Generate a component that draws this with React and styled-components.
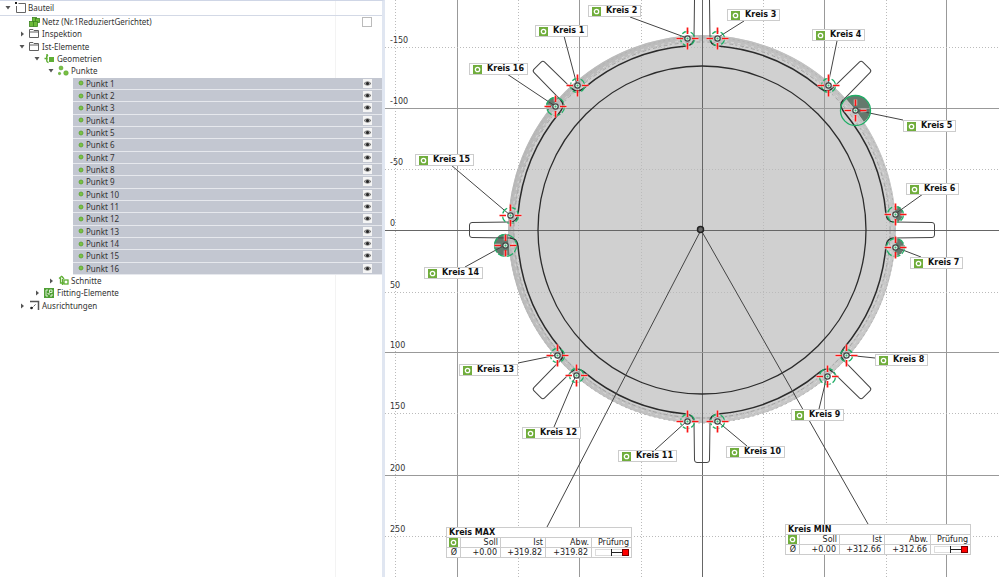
import React from 'react'
import styled, { createGlobalStyle } from 'styled-components'

// everything on the canvas is measured from its top left corner
const CX = 317
const CY = 230

const pins = [
  { id: 1, x: 192, y: 85, r: 7, lx: 150, ly: 25, fx: 179, fy: 36 },
  { id: 2, x: 302, y: 38, r: 7, lx: 203, ly: 5, fx: 245, fy: 17 },
  { id: 3, x: 332, y: 38, r: 7, lx: 342, ly: 9, fx: 359, fy: 21 },
  { id: 4, x: 443, y: 85, r: 7, lx: 427, ly: 29, fx: 452, fy: 41 },
  { id: 5, x: 470, y: 110, r: 15, lx: 518, ly: 120, fx: 518, fy: 120, solid: true },
  { id: 6, x: 510, y: 214, r: 8, lx: 521, ly: 183, fx: 538, fy: 194, solid: true },
  { id: 7, x: 510, y: 247, r: 9, lx: 525, ly: 257, fx: 536, fy: 257, solid: true },
  { id: 8, x: 461, y: 355, r: 6, lx: 490, ly: 354, fx: 490, fy: 358 },
  { id: 9, x: 442, y: 376, r: 8, lx: 406, ly: 409, fx: 434, fy: 409 },
  { id: 10, x: 332, y: 421, r: 7, lx: 341, ly: 446, fx: 362, fy: 446 },
  { id: 11, x: 302, y: 421, r: 7, lx: 233, ly: 450, fx: 270, fy: 450 },
  { id: 12, x: 191, y: 375, r: 7, lx: 137, ly: 427, fx: 169, fy: 427 },
  { id: 13, x: 172, y: 355, r: 7, lx: 74, ly: 364, fx: 133, fy: 363 },
  { id: 14, x: 120, y: 245, r: 11, lx: 39, ly: 267, fx: 80, fy: 267, solid: true },
  { id: 15, x: 125, y: 215, r: 8, lx: 30, ly: 154, fx: 66, fy: 165 },
  { id: 16, x: 170, y: 106, r: 9, lx: 84, ly: 63, fx: 122, fy: 74, solid: true },
]

const columns = [10, 72, 133, 194, 256, 317, 378, 439, 501, 561]
const rows = [
  { y: 47, label: '-150' },
  { y: 108, label: '-100' },
  { y: 169, label: '-50' },
  { y: 230, label: '0' },
  { y: 292, label: '50' },
  { y: 352, label: '100' },
  { y: 413, label: '150' },
  { y: 475, label: '200' },
  { y: 536, label: '250' },
]

const results = [
  { title: 'Kreis MAX', value: '+319.82', x: 61, y: 527 },
  { title: 'Kreis MIN', value: '+312.66', x: 400, y: 524 },
]

const points = Array.from({ length: 16 }, (_, i) => i + 1)
const arms = [0, 45, 90, 135, 180, 225, 270, 315]

const icons = {
  part: (
    <>
      <path d="M3.5 1.5H10.5V10.5H1.5V4" fill="none" stroke="#666" />
      <rect x="0" y="0" width="2" height="2" fill="#222" />
    </>
  ),
  mesh: (
    <g stroke="#3c8420" strokeWidth="0.8" fill="#6dbb3a">
      <rect x="3.5" y="1.5" width="4" height="5" />
      <rect x="6.5" y="2.5" width="4" height="4" />
      <rect x="0.5" y="5.5" width="4" height="5" />
      <rect x="4.5" y="5.5" width="4" height="5" />
    </g>
  ),
  folder: (
    <path d="M0.5 9.5V1.5H4L5 2.5H9.5V9.5ZM0.5 4H9.5" fill="none" stroke="#606060" />
  ),
  geometry: (
    <g fill="#5fae35">
      <rect x="5" y="4" width="5" height="5" />
      <path d="M4 2Q2 3 3 5.500L0.500 5.500M3 5.500Q2 9 4.500 9.500M3 1V4" fill="none" stroke="#5fae35" strokeWidth="1.4" />
    </g>
  ),
  points: (
    <g fill="#79c142" stroke="#4d9628" strokeWidth="0.5">
      <circle cx="3" cy="3" r="2" />
      <circle cx="1.500" cy="8.500" r="1.200" />
      <circle cx="8" cy="8" r="2.300" />
    </g>
  ),
  sections: (
    <g fill="none" stroke="#5fae35" strokeWidth="1.300">
      <rect x="6" y="5" width="4" height="4" />
      <path d="M1 3.500L4 1M2.500 3V8H6M4 1.500L6 4M4.500 4V10" />
    </g>
  ),
  fitting: (
    <>
      <rect x="0" y="1" width="10" height="10" fill="#4f9f35" />
      <path d="M4 3H2V9H4M6 9H8V7M5.500 5.500V3H8V5.500ZM4 6V7H6" fill="none" stroke="#eaf6e2" strokeWidth="0.900" />
    </>
  ),
  alignment: (
    <>
      <path d="M1 1.500H9.500V10" fill="none" stroke="#555" strokeWidth="1.500" />
      <path d="M3 8L7 4" stroke="#555" strokeDasharray="2 1" />
      <circle cx="2.500" cy="8" r="1.300" fill="#222" />
    </>
  ),
}

function TreeItem({ icon, text, indent, open, leaf, children }) {
  return (
    <Row $indent={indent}>
      {leaf ? <span /> : (
        <Toggle type="button" aria-label={text} aria-expanded={!!open}>
          <svg width="6" height="6" viewBox="0 0 6 6">
            <path d={open ? 'M0.500 1H5.500L3 4.500Z' : 'M2 0.500V5.500L5 3Z'} fill="#555" />
          </svg>
        </Toggle>
      )}
      <svg width="12" height="12" viewBox="0 0 12 12">{icons[icon]}</svg>
      <span>{text}</span>
      {children}
    </Row>
  )
}

function CircleIcon() {
  return (
    <svg width="9" height="9" viewBox="0 0 9 9">
      <rect width="9" height="9" fill="#70ad3c" />
      <circle cx="4.5" cy="4.5" r="2.2" fill="none" stroke="#fff" strokeWidth="1.3" />
    </svg>
  )
}

function Drawing() {
  return (
    <Plot aria-hidden="true">
      <defs>
        <linearGradient id="rim" x1="0" y1="0.2" x2="1" y2="0.7">
          <stop offset="0" stopColor="#b6b6b6" />
          <stop offset="0.5" stopColor="#bfbfbf" />
          <stop offset="1" stopColor="#c8c8c8" />
        </linearGradient>
      </defs>

      {pins.filter((p) => p.solid).map((p) => (
        <circle key={p.id} cx={p.x} cy={p.y} r={p.r} fill="#64796d" />
      ))}
      <circle cx={CX} cy={CY - 1} r="194" fill="#d0d0d0" />
      <circle cx={CX} cy={CY - 1} r="191" fill="none" stroke="url(#rim)" strokeWidth="6" strokeOpacity="0.9" />
      <g fill="none">
        <circle cx={CX} cy={CY} r="188" stroke="#999" strokeWidth="0.800" strokeDasharray="4 2 2 3" />
        <circle cx={CX} cy={CY} r="190" stroke="#ddd" strokeWidth="0.800" strokeDasharray="3 4" />
        <circle cx={CX} cy={CY} r="193" stroke="#b2b2b2" strokeDasharray="2 3" />
      </g>

      <g shapeRendering="crispEdges">
        {columns.map((x, i) => (
          <GridLine key={x} x1={x + 0.5} x2={x + 0.5} y1="0" y2="100%" $dotted={i % 2 === 0} $axis={x === CX} />
        ))}
        {rows.map(({ y }, i) => (
          <GridLine key={y} x1="0" x2="100%" y1={y + 0.5} y2={y + 0.5} $dotted={i % 2 === 0} $axis={y === CY} />
        ))}
      </g>

      <g transform={`translate(${CX} ${CY})`} fill="none">
        <circle r="164" stroke="#2b2b2b" strokeWidth="1.300" />
        {arms.map((angle) => (
          <g key={angle} transform={`rotate(${angle})`}>
            <path
              d="M-8 -192L-7.500 -230Q-7.500 -232.500 -5 -232.500H5Q7.500 -232.500 7.500 -230L8 -192"
              stroke="#444"
            />
            <path
              d="M-16 -184Q-8 -185 -8 -192M8 -192Q8 -185 16 -184A184.700 184.700 0 0 1 118.800 -141.400"
              stroke="#2b2b2b"
              strokeWidth="1.500"
            />
          </g>
        ))}
      </g>

      <g stroke="#444">
        {pins.map((p) => <line key={p.id} x1={p.fx} y1={p.fy} x2={p.x} y2={p.y} />)}
        <line x1="316" y1="230" x2="162" y2="527" />
        <line x1="316" y1="230" x2="483" y2="524" />
      </g>
      <circle cx="315.500" cy="229.500" r="3" fill="#666" stroke="#222" strokeWidth="1.500" />

      {pins.map((p) => (
        <g key={p.id} transform={`translate(${p.x + 0.5} ${p.y + 0.5})`} fill="none">
          <circle r={p.r} stroke="#1fae66" strokeWidth="1.300" strokeDasharray={p.r > 12 ? 'none' : '7 2'} />
          <path d="M-11 0H-5M5 0H11M0 -11V-5M0 5V11" stroke="#fff" strokeWidth="3.500" strokeOpacity="0.6" />
          <path d="M-11 0H-4.500M4.500 0H11M0 -11V-4.500M0 4.500V11" stroke="#fb1414" strokeWidth="1.700" />
          <circle r="2.700" fill="#d9eee2" stroke="#444" strokeWidth="1.200" />
          <circle r="1" fill="#35b377" />
        </g>
      ))}

      {rows.map(({ y, label }) => (
        <Tick key={label} x="5" y={y - 4}>{label}</Tick>
      ))}
    </Plot>
  )
}

export default function App() {
  return (
    <Page>
      <GlobalStyle />
      <Sidebar>
        <Header>
          <TreeItem icon="part" text="Bauteil" indent={2} open />
        </Header>
        <Tree>
          <TreeItem icon="mesh" text="Netz (Nr.1ReduziertGerichtet)" indent={16} leaf>
            <Check type="checkbox" aria-label="Netz (Nr.1ReduziertGerichtet)" />
          </TreeItem>
          <TreeItem icon="folder" text="Inspektion" indent={16} />
          <TreeItem icon="folder" text="Ist-Elemente" indent={16} open />
          <TreeItem icon="geometry" text="Geometrien" indent={31} open />
          <TreeItem icon="points" text="Punkte" indent={45} open />
          {points.map((n) => (
            <Point key={n}>
              <svg width="12" height="10" viewBox="0 0 12 10">
                <circle cx="8" cy="5" r="2" fill="#7cc243" stroke="#4f9a2a" strokeWidth="0.7" />
              </svg>
              <span>Punkt {n}</span>
              <Eye type="button" aria-label={`Punkt ${n}`}>
                <svg width="9" height="9" viewBox="0 0 9 9">
                  <path d="M1 4.500Q4.500 1 8 4.500Q4.500 8 1 4.500Z" fill="#aaa" stroke="#666" strokeWidth="0.800" />
                  <circle cx="4.500" cy="4.500" r="1.500" fill="#222" />
                </svg>
              </Eye>
            </Point>
          ))}
          <TreeItem icon="sections" text="Schnitte" indent={45} />
          <TreeItem icon="fitting" text="Fitting-Elemente" indent={31} />
          <TreeItem icon="alignment" text="Ausrichtungen" indent={16} />
        </Tree>
      </Sidebar>

      <Canvas>
        <Drawing />
        {pins.map((p) => (
          <Label key={p.id} $x={p.lx} $y={p.ly}>
            <CircleIcon />
            Kreis {p.id}
          </Label>
        ))}
        {results.map((r) => (
          <Result key={r.title} $x={r.x} $y={r.y}>
            <colgroup>
              <Col $width={14} />
              <Col $width={40} />
              <Col $width={45} />
              <Col $width={46} />
              <Col $width={40} />
            </colgroup>
            <thead>
              <tr><Title colSpan="5">{r.title}</Title></tr>
              <tr>
                <HeadCell><CircleIcon /></HeadCell>
                <HeadCell>Soll</HeadCell>
                <HeadCell>Ist</HeadCell>
                <HeadCell>Abw.</HeadCell>
                <HeadCell>Prüfung</HeadCell>
              </tr>
            </thead>
            <tbody>
              <tr>
                <Cell>Ø</Cell>
                <Cell>+0.00</Cell>
                <Cell>{r.value}</Cell>
                <Cell>{r.value}</Cell>
                <Cell>
                  <svg width="34" height="7" viewBox="0 0 34 7">
                    <rect x="0.5" y="0.5" width="32" height="6" fill="#fff" stroke="#ddd" />
                    <path d="M16.500 0V7M16.500 3.500H28" stroke="#222" />
                    <rect x="27.500" y="0.500" width="6" height="6" fill="#f00" stroke="#700" />
                  </svg>
                </Cell>
              </tr>
            </tbody>
          </Result>
        ))}
      </Canvas>
    </Page>
  )
}

const GlobalStyle = createGlobalStyle`
  * {
    box-sizing: border-box;
  }
  body {
    margin: 0;
    background: #fff;
    font-family: 'Noto Sans', sans-serif;
    font-size: 8px;
    color: #333;
  }
  svg {
    display: block;
    flex: none;
  }
`

const Page = styled.div`
  display: grid;
  grid-template-columns: 385fr 614fr;
  min-height: 100vh;
`

const Sidebar = styled.aside`
  border-top: 1px solid #cfd6e6;
  border-right: 3px solid #e0e6f1;
  background: linear-gradient(#f3f3f3, #f3f3f3) right 46px top / 1px 100% no-repeat;
`

const Header = styled.div`
  display: grid;
  height: 15px;
  border-bottom: 1px solid #d3d9e6;
`

const Tree = styled.div`
  display: grid;
  grid-auto-rows: 1fr;
  min-height: 296px;
`

const Row = styled.div`
  display: grid;
  grid-template-columns: 12px 12px 1fr auto;
  column-gap: 1px;
  align-items: center;
  padding-left: ${(p) => p.$indent}px;
  padding-right: 10px;
  line-height: 12px;
  white-space: nowrap;
`

const Point = styled.div`
  display: grid;
  grid-template-columns: 12px 1fr auto;
  column-gap: 1px;
  align-items: center;
  margin-left: 73px;
  padding-right: 10px;
  line-height: 11px;
  background: #c3c7d1;
  border-bottom: 1px solid #e6e8ed;
`

const Toggle = styled.button`
  display: flex;
  justify-content: center;
  padding: 0;
  border: 0;
  background: none;
`

const Check = styled.input`
  appearance: none;
  width: 10px;
  height: 10px;
  margin: 0;
  border: 1px solid #bbb;
  background: #fff;
`

const Eye = styled.button`
  padding: 0;
  border: 0;
  background: #f4f4f4;
`

const Canvas = styled.main`
  position: relative;
  overflow: hidden;
  font-family: 'DejaVu Sans', sans-serif;
  color: #222;
`

const Plot = styled.svg`
  width: 100%;
  height: 100%;
`

const GridLine = styled.line`
  stroke: ${(p) => (p.$axis ? '#666' : p.$dotted ? '#bbb' : '#999')};
  stroke-dasharray: ${(p) => (p.$dotted ? '1 2' : 'none')};
`

const Tick = styled.text`
  font-size: 8px;
  fill: #333;
`

const Label = styled.div`
  position: absolute;
  left: ${(p) => p.$x}px;
  top: ${(p) => p.$y}px;
  display: flex;
  align-items: center;
  gap: 5px;
  padding: 0 3px;
  border: 1px solid #ccc;
  background: #fff;
  line-height: 10px;
  font-weight: bold;
  color: #111;
  white-space: nowrap;
`

const Result = styled.table`
  position: absolute;
  left: ${(p) => p.$x}px;
  top: ${(p) => p.$y}px;
  table-layout: fixed;
  width: 185px;
  border-collapse: collapse;
  background: #fff;
  line-height: 9px;
`

const Col = styled.col`
  width: ${(p) => p.$width}px;
`

const Title = styled.th`
  padding: 0 2px;
  border: 1px solid #ccc;
  text-align: left;
  font-size: 8px;
  color: #111;
`

const Cell = styled.td`
  padding: 0 3px;
  border: 1px solid #ccc;
  text-align: right;
  font-size: 8px;
`

const HeadCell = styled(Cell).attrs({ as: 'th' })`
  padding: 0 2px;
  font-weight: normal;
`
